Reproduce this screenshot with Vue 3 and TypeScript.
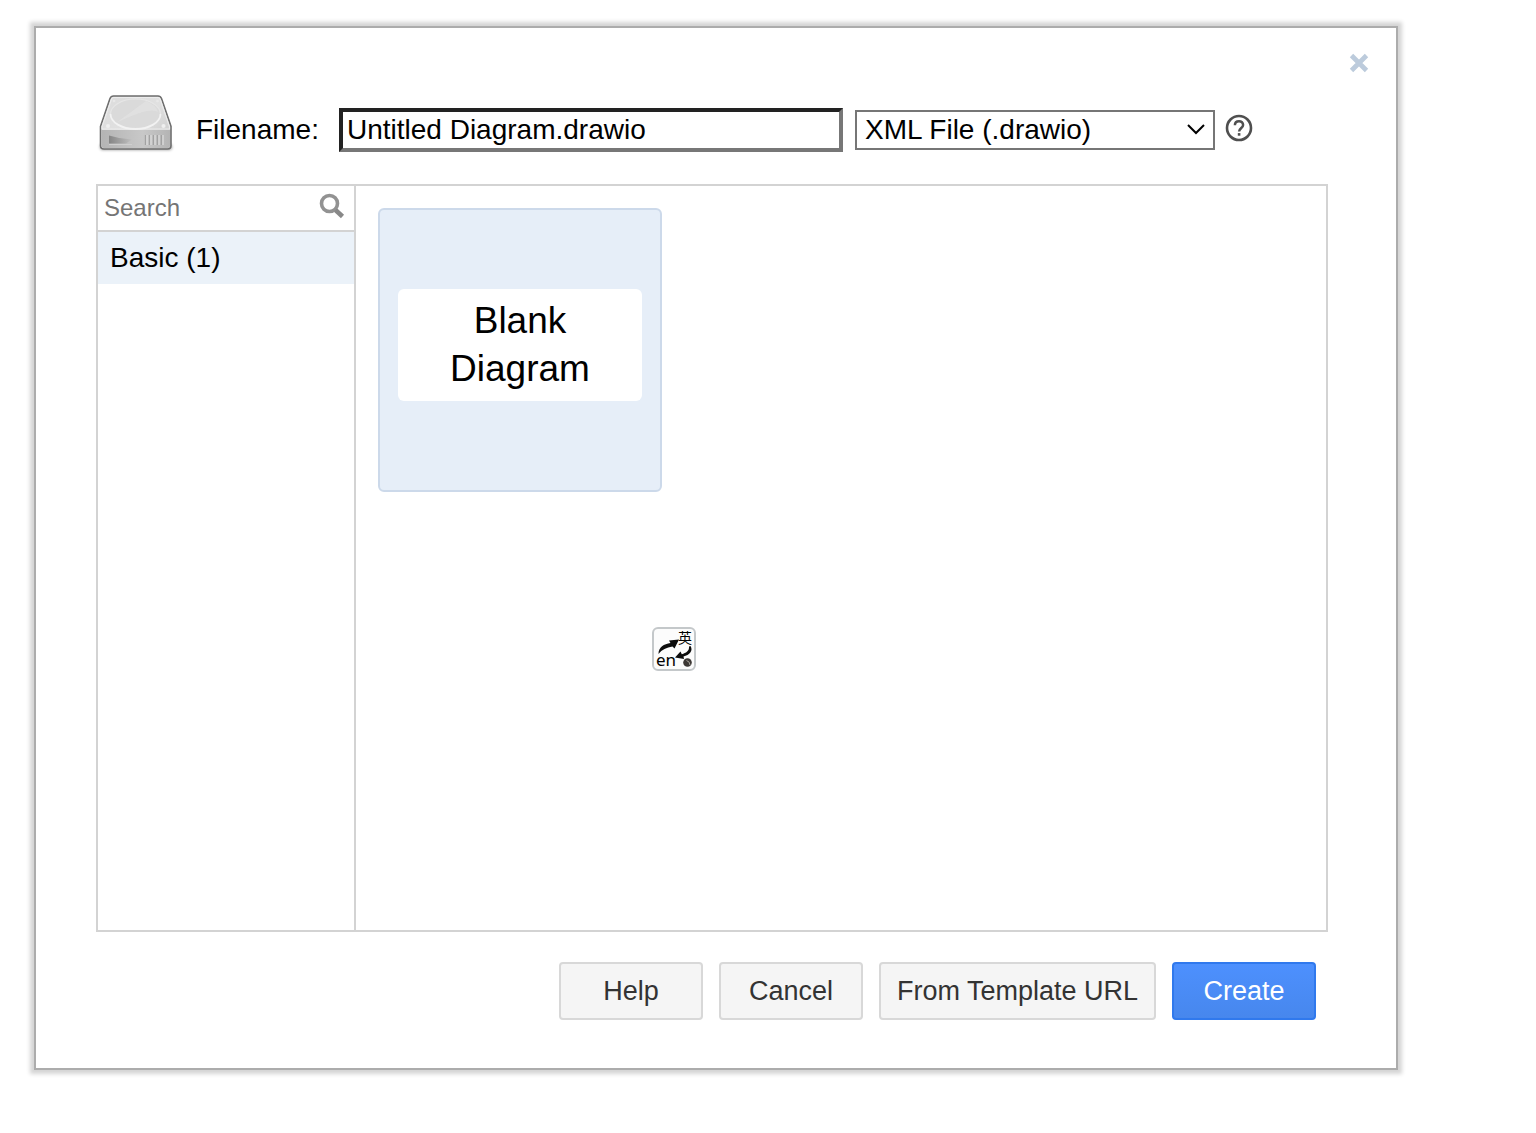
<script setup lang="ts">
import { ref } from 'vue'

const filename = ref('Untitled Diagram.drawio')
const format = ref('drawio')
const search = ref('')

const categories = [{ name: 'Basic', count: 1 }]
const actions = ['Help', 'Cancel', 'From Template URL']
</script>

<template>
  <main class="dialog" role="dialog" aria-label="New diagram">
    <button class="close" type="button" aria-label="Close">
      <svg width="20" height="20" viewBox="0 0 20 20">
        <path d="M2.500 2.500 17.500 17.500M17.500 2.500 2.500 17.500" stroke="#bccbdc" stroke-width="4.800" fill="none" />
      </svg>
    </button>

    <header class="head">
      <svg class="drive" width="80" height="64" viewBox="0 0 80 64" aria-hidden="true">
        <defs>
          <linearGradient id="top" x1="0" y1="0" x2="1" y2="1">
            <stop offset="0" stop-color="#dcdcdc" />
            <stop offset="0.5" stop-color="#e0e0e0" />
            <stop offset="1" stop-color="#c8c8c8" />
          </linearGradient>
          <linearGradient id="front" x1="0" y1="0" x2="1" y2="0">
            <stop offset="0" stop-color="#b4b4b4" />
            <stop offset="0.6" stop-color="#c8c8c8" />
            <stop offset="1" stop-color="#b4b4b4" />
          </linearGradient>
          <linearGradient id="slot" x1="0" y1="0" x2="1" y2="0">
            <stop offset="0" stop-color="#858585" />
            <stop offset="1" stop-color="#c0c0c0" />
          </linearGradient>
          <filter id="soft" x="-10%" y="-100%" width="120%" height="300%">
            <feGaussianBlur stdDeviation="1.500" />
          </filter>
        </defs>
        <rect x="4" y="52" width="72" height="6" rx="3" fill="#000" opacity="0.4" filter="url(#soft)" />
        <path d="M17.500 4Q15 4 14 6.500L4.500 34.500V53.500Q4.500 57 8 57H71.500Q75 57 75 53.500V34.500L65.500 6.500Q64.500 4 62 4Z" fill="url(#top)" stroke="#6e6e6e" stroke-width="1.600" />
        <path d="M5.500 38H74V53Q74 56 71.500 56H8Q5.500 56 5.500 53Z" fill="url(#front)" />
        <path d="M17.500 5.500H62Q63.500 5.500 64.300 7.500L73.500 34.500V37H6V34.500L15.300 7.500Q16 5.500 17.500 5.500Z" fill="none" stroke="#ececec" stroke-width="1.200" />
        <ellipse cx="39.500" cy="22" rx="25" ry="15" fill="#dadada" />
        <path d="M14.500 22A25 15 0 0 0 64.500 22" fill="none" stroke="#f2f2f2" stroke-width="1.800" />
        <path d="M14.500 22A25 15 0 0 1 64.500 22" fill="none" stroke="#e6e6e6" stroke-width="1.200" />
        <path d="M20 31 50 9Q60 13 62 20Q54 14 20 31Z" fill="#e2e2e2" opacity="0.7" />
        <circle cx="12" cy="34" r="2" fill="#efefef" />
        <circle cx="67.500" cy="34" r="2" fill="#efefef" />
        <circle cx="18" cy="9" r="1.300" fill="#e8e8e8" />
        <circle cx="61.500" cy="9" r="1.300" fill="#e8e8e8" />
        <path d="M13 43.500Q24 47 36 47.500L30 51.500H13Z" fill="url(#slot)" />
        <path d="M13 52.500H36" stroke="#cfcfcf" />
        <path d="M49.500 43V53M53.500 43V53M57.500 43V53M61.500 43V53M65.500 43V53" stroke="#a2a2a2" stroke-width="1.300" />
        <path d="M51 43V53M55 43V53M59 43V53M63 43V53M67 43V53" stroke="#dcdcdc" stroke-width="1.300" />
      </svg>
      <label class="label" for="filename">Filename:</label>
      <input id="filename" v-model="filename" class="filename" type="text" />
      <div class="format">
        <select v-model="format" aria-label="File format">
          <option value="drawio">XML File (.drawio)</option>
        </select>
        <svg class="chevron" width="20" height="12" viewBox="0 0 20 12" aria-hidden="true">
          <path d="M2 2 10 10 18 2" fill="none" stroke="#000" stroke-width="2" />
        </svg>
      </div>
      <button class="help" type="button" aria-label="Help on formats">
        <svg width="28" height="28" viewBox="0 0 28 28">
          <circle cx="14" cy="14" r="12" fill="none" stroke="#4f4f4f" stroke-width="2.600" />
          <path d="M9.900 11.200C9.900 8.700 11.600 7.200 14 7.200S18.100 8.800 18.100 11C18.100 13.800 14.100 14.200 14.100 17.600" fill="none" stroke="#4f4f4f" stroke-width="2.500" />
          <rect x="12.800" y="19.100" width="2.600" height="2.600" fill="#4f4f4f" />
        </svg>
      </button>
    </header>

    <section class="panel">
      <aside class="side">
        <div class="search">
          <input v-model="search" type="text" placeholder="Search" aria-label="Search" />
          <svg width="26" height="26" viewBox="0 0 26 26" aria-hidden="true">
            <circle cx="10.500" cy="10.500" r="8" fill="none" stroke="#929292" stroke-width="3.600" />
            <path d="M16.500 17 23.500 23.500" stroke="#888" stroke-width="4.600" />
          </svg>
        </div>
        <button v-for="c in categories" :key="c.name" class="category" type="button">
          {{ c.name }} ({{ c.count }})
        </button>
      </aside>
      <div class="templates">
        <button class="tile" type="button">
          <span class="caption">Blank Diagram</span>
        </button>
      </div>
      <button class="translate" type="button" aria-label="Translate">
        <svg width="40" height="40" viewBox="0 0 40 40">
          <path d="M4.500 25C4.500 18 10 15 16.500 14L15 11.500 25 10.500 20.500 19.500 18.500 17.500C12.500 18.500 8 20.500 4.500 25Z" fill="#0c0c0c" />
          <path d="M36.500 17C39.500 22 35.500 26 29.500 27.500L30 30 21 28.500 26.500 22.500 27.800 25.200C32 24 35.500 22 35 17.500Z" fill="#0c0c0c" />
          <circle cx="33.500" cy="33.500" r="4.300" fill="#3c3835" />
          <path d="M32.500 31.500Q36 32.500 36 36" fill="none" stroke="#a8a49c" />
          <text x="2" y="37" class="latin">en</text>
          <text x="24" y="14" class="han">英</text>
        </svg>
      </button>
    </section>

    <footer class="actions">
      <button v-for="a in actions" :key="a" class="btn" type="button">{{ a }}</button>
      <button class="btn primary" type="button">Create</button>
    </footer>
  </main>
</template>

<style>
body {
  background: #fff;
}
</style>

<style scoped>
.dialog,
.dialog * {
  box-sizing: border-box;
}

.dialog {
  position: relative;
  margin: 26px 138px 48px 34px;
  padding: 64px 68px 48px 60px;
  border: 2px solid #acacac;
  background: #fff;
  box-shadow: 0 0 4px 4px #d5d5d5;
  color: #000;
  font: 28px/32px "Liberation Sans", Arial, sans-serif;
}

button,
input,
select {
  margin: 0;
  padding: 0;
  border: 0;
  border-radius: 0;
  background: none;
  color: inherit;
  font: inherit;
  outline: none;
}

svg {
  display: block;
  flex: none;
  overflow: visible;
}

.close {
  position: absolute;
  top: 25px;
  right: 27px;
}

.head {
  display: flex;
  align-items: center;
  height: 76px;
  padding-right: 75px;
}

.drive {
  margin-bottom: 12px;
}

.label {
  margin: 0 20px;
}

.filename {
  flex: 1;
  min-width: 0;
  height: 44px;
  padding: 0 4px;
  border: 4px solid;
  border-color: #222 #777 #777 #222;
}

.format {
  position: relative;
  width: 360px;
  margin: 0 10px 0 12px;
}

.format select {
  display: block;
  width: 100%;
  height: 40px;
  padding: 0 8px;
  border: 2px solid #767676;
  appearance: none;
}

.chevron {
  position: absolute;
  top: 13px;
  right: 9px;
  pointer-events: none;
}

.help {
  margin-bottom: 4px;
}

.panel {
  position: relative;
  display: flex;
  min-height: 748px;
  margin-top: 16px;
  border: 2px solid #d3d3d3;
}

.side {
  flex: none;
  width: 258px;
  border-right: 2px solid #d3d3d3;
}

.search {
  display: flex;
  align-items: center;
  height: 46px;
  padding: 0 9px 4px 6px;
  border-bottom: 2px solid #d3d3d3;
}

.search input {
  flex: 1;
  min-width: 0;
  height: 40px;
  padding-top: 4px;
  font-size: 24px;
}

.search input::placeholder {
  color: #757575;
  opacity: 1;
}

.category {
  display: block;
  width: 100%;
  height: 52px;
  padding: 0 12px;
  background: #ebf2f9;
  text-align: left;
}

.templates {
  flex: 1;
  padding: 22px;
}

.tile {
  display: flex;
  align-items: center;
  width: 284px;
  height: 284px;
  padding: 0 18px 10px;
  border: 2px solid #ccd9ea;
  border-radius: 6px;
  background: #e6eef8;
}

.caption {
  flex: 1;
  padding: 8px 40px;
  border-radius: 6px;
  background: #fff;
  font-size: 37px;
  line-height: 48px;
}

.translate {
  position: absolute;
  top: 441px;
  left: 554px;
  border: 2px solid #c4c8ca;
  border-radius: 6px;
  background: #fcfcfc;
}

.latin {
  font: 17px "Noto Sans", sans-serif;
}

.han {
  font: 14px "Noto Sans CJK SC", sans-serif;
}

.actions {
  display: flex;
  justify-content: flex-end;
  gap: 16px;
  margin-top: 30px;
  padding-right: 12px;
}

.btn {
  min-width: 144px;
  height: 58px;
  padding: 0 16px;
  border: 2px solid #d8d8d8;
  border-radius: 4px;
  background: #f5f5f5;
  color: #333;
  font-size: 27px;
}

.primary {
  border-color: #3079ed;
  background: linear-gradient(#4d90fe, #4787ed);
  color: #fff;
}
</style>
